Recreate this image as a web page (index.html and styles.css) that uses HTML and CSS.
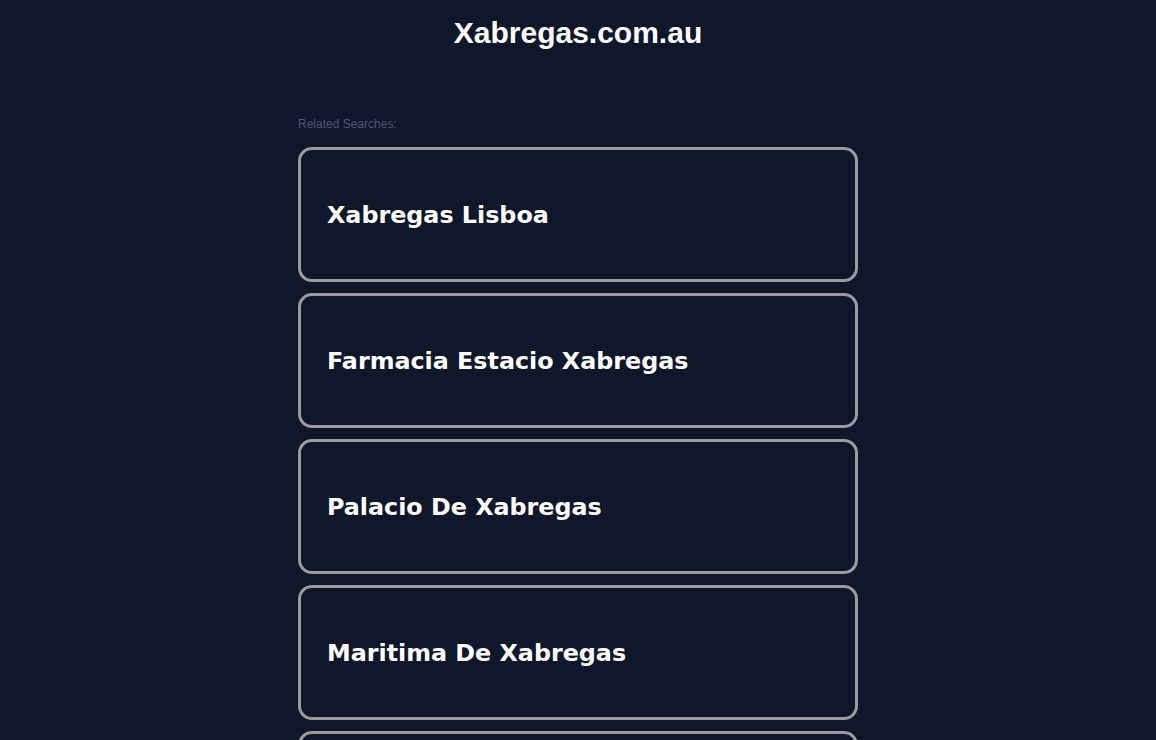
FILE: index.html
```html
<!DOCTYPE html>
<html>
<head>
<meta charset="utf-8">
<title>Xabregas.com.au</title>
<link rel="stylesheet" href="styles.css">
</head>
<body>
<header class="site-header">
  <h1 class="site-title">Xabregas.com.au</h1>
</header>
<main class="content">
  <p class="related-label">Related Searches:</p>
  <ul class="link-list">
    <li class="link-card"><a class="link-text" href="#">Xabregas Lisboa</a></li>
    <li class="link-card"><a class="link-text" href="#">Farmacia Estacio Xabregas</a></li>
    <li class="link-card"><a class="link-text" href="#">Palacio De Xabregas</a></li>
    <li class="link-card"><a class="link-text" href="#">Maritima De Xabregas</a></li>
    <li class="link-card"><a class="link-text" href="#">Xabregas Restaurante</a></li>
  </ul>
</main>
</body>
</html>
```
FILE: styles.css
```css
html, body {
  margin: 0;
  padding: 0;
  background: #11172b;
}
body {
  font-family: "Liberation Sans", Arial, sans-serif;
  color: #ffffff;
}
.site-header {
  padding-top: 15px;
  text-align: center;
}
.site-title {
  margin: 0;
  font-size: 30px;
  line-height: 36px;
  font-weight: bold;
  color: #ffffff;
}
.content {
  width: 560px;
  margin: 0 auto;
  padding-top: 66px;
}
.related-label {
  margin: 0 0 16px 0;
  font-size: 12px;
  line-height: 14px;
  color: #4f5573;
}
.link-list {
  list-style: none;
  margin: 0;
  padding: 0;
  display: flex;
  flex-direction: column;
  gap: 11px;
}
.link-card {
  box-sizing: border-box;
  height: 135px;
  border: 3px solid #9b9b9f;
  border-radius: 14px;
  display: flex;
  align-items: center;
  padding: 0 26px;
}
.link-text {
  font-family: "DejaVu Sans", Verdana, sans-serif;
  font-weight: bold;
  font-size: 23.8px;
  color: #ffffff;
  text-decoration: none;
}
```
